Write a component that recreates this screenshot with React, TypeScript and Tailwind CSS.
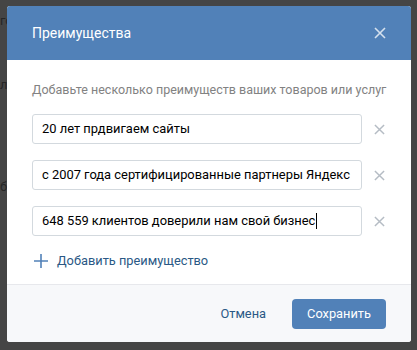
import * as React from "react";

const items = [
  "20 лет прдвигаем сайты",
  "с 2007 года сертифицированные партнеры Яндекс",
  "648 559 клиентов доверили нам свой бизнес",
];

const CloseIcon: React.FC<{ className?: string }> = ({ className }) => (
  <svg viewBox="0 0 12 12" className={className} fill="none" stroke="currentColor" strokeWidth="1.6">
    <path d="M1 1L11 11M11 1L1 11" />
  </svg>
);

export default function App() {
  return (
    <div
      className="relative h-[350px] w-[417px] overflow-hidden bg-[#454545] pl-[7px] pt-[6px]"
      style={{ fontFamily: "Roboto, 'Noto Sans', sans-serif" }}
    >
      {/* dimmed page behind the modal */}
      <span className="absolute left-0 top-[11px] text-[13px] text-[#262626]">го</span>
      <span className="absolute left-0 top-[75px] text-[13px] text-[#262626]">ли</span>
      <span className="absolute left-0 top-[177px] text-[13px] text-[#262626]">б</span>

      <div className="relative flex w-[404px] flex-col overflow-hidden rounded-[3px] bg-white">
        <div className="flex h-[54px] items-center justify-between bg-[#5181b8] pl-[25px] pr-[25px]">
          <span className="text-[14px] text-white">Преимущества</span>
          <CloseIcon className="h-[12px] w-[12px] text-[#d5e1ee]" />
        </div>

        <div className="flex flex-col px-[25px] pt-[21px] pb-[14px]">
          <p className="whitespace-nowrap text-[12.5px] leading-[17px] text-[#828282]">
            Добавьте несколько преимуществ ваших товаров или услуг
          </p>
          <div className="mt-[16px] flex flex-col gap-[16px]">
            {items.map((text, i) => (
              <div key={i} className="flex items-center">
                <div className="flex h-[30px] w-[330px] items-center whitespace-nowrap rounded-[3px] border border-[#d3d9de] px-[9px] text-[12.9px] text-[#000]">
                  {text}
                  {i === 2 && <span className="ml-[1px] h-[16px] w-px bg-black" />}
                </div>
                <CloseIcon className="ml-[12px] h-[11px] w-[11px] text-[#b5bcc4]" />
              </div>
            ))}
          </div>
          <div className="mt-[15px] flex items-center gap-[9px] pl-[2px] text-[#2a5885]">
            <svg viewBox="0 0 14 14" className="h-[14px] w-[14px] text-[#5181b8]" stroke="currentColor" strokeWidth="1.6" fill="none">
              <path d="M7 0V14M0 7H14" />
            </svg>
            <span className="text-[12.8px]">Добавить преимущество</span>
          </div>
        </div>

        <div className="flex h-[58px] items-center justify-end gap-[26px] border-t border-[#e7e8ec] bg-[#f7f8fa] pr-[25px]">
          <span className="text-[12.8px] text-[#2a5885]">Отмена</span>
          <div className="flex h-[30px] w-[94px] items-center justify-center rounded-[4px] bg-[#5181b8] text-[12.8px] text-white">
            Сохранить
          </div>
        </div>
      </div>
    </div>
  );
}
